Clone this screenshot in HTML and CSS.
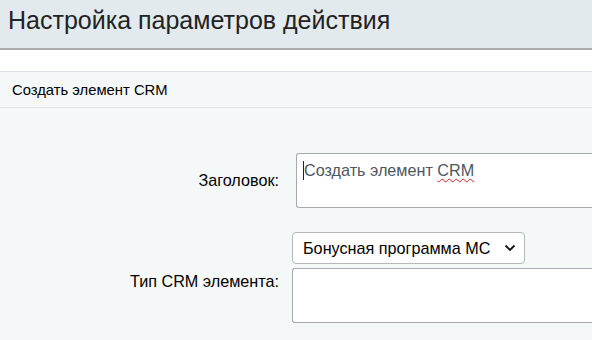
FILE: index.html
```
<!DOCTYPE html>
<html lang="ru">
<head>
<meta charset="utf-8">
<link rel="stylesheet" href="styles.css">
</head>
<body>
<div class="page">
  <header class="head">
    <h1 class="title">Настройка параметров действия</h1>
  </header>
  <div class="gap"></div>
  <div class="section">Создать элемент CRM</div>
  <div class="form">
    <div class="label l1">Заголовок:</div>
    <div class="field f1">
      <div class="textarea ta1"><span class="caret"></span>Создать элемент <span class="spell">CRM</span></div>
    </div>
    <div class="label l2">Тип CRM элемента:</div>
    <div class="field f2">
      <div class="select">
        <span class="select-text">Бонусная программа МС</span>
        <svg class="chev" width="12" height="8" viewBox="0 0 12 8"><path d="M1.5 1.5 L6 6 L10.5 1.5" fill="none" stroke="#111" stroke-width="1.8"/></svg>
      </div>
      <div class="textarea ta2"></div>
    </div>
  </div>
</div>
</body>
</html>
```
FILE: styles.css
```
html, body {
  margin: 0;
  padding: 0;
}
body {
  width: 592px;
  height: 340px;
  overflow: hidden;
  background: #f5f8f9;
  font-family: "Liberation Sans", Arial, sans-serif;
}
.head {
  height: 48px;
  background: #e2eaed;
  border-bottom: 2px solid #a9abad;
  display: flex;
  align-items: center;
  padding-left: 8px;
}
.title {
  margin: 0;
  font-weight: normal;
  font-size: 25px;
  color: #222;
  position: relative;
  top: -4px;
}
.gap {
  height: 21px;
  background: #fff;
}
.section {
  height: 35px;
  border-top: 1px solid #d9e4ea;
  border-bottom: 1px solid #dfe6ea;
  display: flex;
  align-items: center;
  padding-left: 12px;
  font-size: 14.8px;
  color: #000;
  background: #f5f8f9;
}
.form {
  display: grid;
  grid-template-columns: 280px 312px;
  row-gap: 24px;
  padding-top: 45px;
}
.label {
  text-align: right;
  font-size: 16.2px;
  color: #000;
  align-self: center;
  padding-right: 1px;
}
.l2 {
  position: relative;
  top: 4px;
}
.field {
  display: flex;
  flex-direction: column;
}
.f1 {
  padding-left: 16px;
}
.f2 {
  padding-left: 12px;
  gap: 4px;
}
.textarea {
  background: #fff;
  border: 1px solid #a6aab0;
  border-right: none;
  border-radius: 3px 0 0 3px;
  box-sizing: border-box;
}
.ta1 {
  height: 55px;
  padding: 7px 0 0 6px;
  font-size: 16.2px;
  color: #4f5660;
  position: relative;
}
.caret {
  display: inline-block;
  width: 1px;
  height: 19px;
  background: #222;
  vertical-align: -4px;
  margin-right: 0;
}
.spell {
  text-decoration: underline wavy #e02020;
  text-decoration-thickness: 1px;
  text-underline-offset: 2px;
}
.ta2 {
  height: 55px;
}
.select {
  width: 233px;
  height: 32px;
  box-sizing: border-box;
  background: #fff;
  border: 1px solid #b4b7bb;
  border-radius: 4px;
  display: flex;
  align-items: center;
  justify-content: space-between;
  padding: 0 8px 0 10px;
}
.select-text {
  font-size: 16.2px;
  color: #000;
}
.chev {
  display: block;
}
```
